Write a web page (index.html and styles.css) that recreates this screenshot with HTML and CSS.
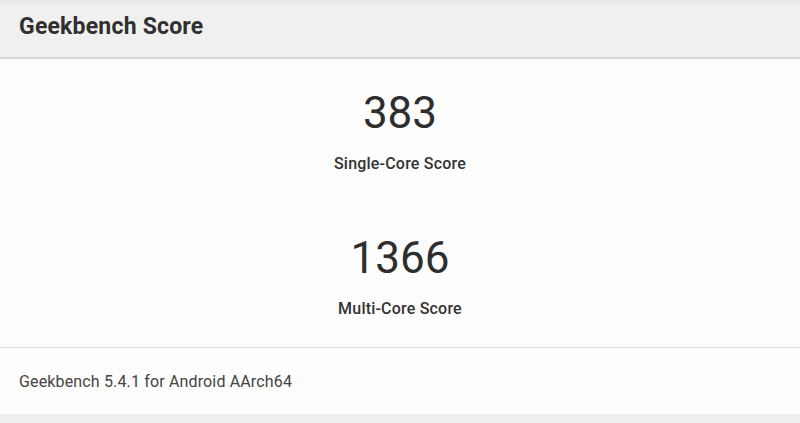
FILE: index.html
```html
<!DOCTYPE html>
<html lang="en">
<head>
<meta charset="utf-8">
<title>Geekbench Score</title>
<link rel="stylesheet" href="styles.css">
</head>
<body>
<div class="top-strip"></div>
<section class="card">
  <header class="card-header">
    <h2 class="card-title">Geekbench Score</h2>
  </header>
  <div class="card-body">
    <div class="score">
      <div class="score-value">383</div>
      <div class="score-label">Single-Core Score</div>
    </div>
    <div class="score">
      <div class="score-value">1366</div>
      <div class="score-label">Multi-Core Score</div>
    </div>
  </div>
  <footer class="card-footer">Geekbench 5.4.1 for Android AArch64</footer>
</section>
</body>
</html>
```
FILE: styles.css
```css
html, body {
  margin: 0;
  padding: 0;
}
body {
  background: #efefef;
  font-family: Roboto, "Liberation Sans", sans-serif;
  color: #333;
}
.top-strip {
  height: 4px;
  background: #ebebeb;
}
.card {
  background: #fdfdfd;
  box-shadow: 0 1px 2px rgba(0,0,0,0.12);
}
.card-header {
  height: 55px;
  box-sizing: border-box;
  padding: 9px 19px 0;
  background: #f0f0f0;
  border-bottom: 2px solid #d7d7d7;
}
.card-title {
  margin: 0;
  font-size: 23px;
  line-height: 28px;
  font-weight: 700;
  letter-spacing: 0.2px;
  color: #303030;
}
.card-body {
  padding: 28px 0;
  display: flex;
  flex-direction: column;
  align-items: center;
  gap: 58px;
  height: 288px;
  box-sizing: border-box;
}
.score {
  display: flex;
  flex-direction: column;
  align-items: center;
  gap: 15px;
}
.score-value {
  font-size: 44px;
  line-height: 52px;
  font-weight: 400;
  color: #2e2e2e;
}
.score-label {
  font-size: 16px;
  line-height: 20px;
  font-weight: 500;
  letter-spacing: 0.2px;
  color: #333;
}
.card-footer {
  border-top: 1px solid #dcdcdc;
  height: 67px;
  box-sizing: border-box;
  padding: 24px 19px 0;
  font-size: 16px;
  line-height: 20px;
  letter-spacing: 0.15px;
  color: #444;
}
```
